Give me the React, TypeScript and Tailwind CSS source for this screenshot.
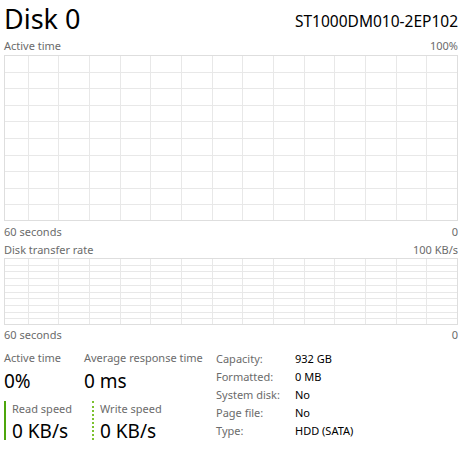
const labelText = "text-[11px] leading-[16px] text-[#6b6b6b]";
const fontStack = { fontFamily: '"Noto Sans", "Open Sans", sans-serif' };

function Grid({ height, rows }: { height: number; rows: number }) {
    const width = 454;
    const colStep = 30.67;
    const cols = [];
    for (let k = 1; k <= 14; k++) {
        cols.push(Math.round(453 - colStep * k) + 0.5);
    }
    const hLines = [];
    for (let r = 1; r < rows; r++) {
        hLines.push(Math.round((height / rows) * r) + 0.5);
    }
    return (
        <svg width={width} height={height} className="block">
            {cols.map((x) => (
                <line key={x} x1={x} y1={0} x2={x} y2={height} stroke="#e8e8e8" />
            ))}
            {hLines.map((y) => (
                <line key={y} x1={0} y1={y} x2={width} y2={y} stroke="#e8e8e8" />
            ))}
            <rect
                x={0.5}
                y={0.5}
                width={width - 1}
                height={height - 1}
                fill="none"
                stroke="#dedede"
            />
        </svg>
    );
}

function LabelRow({ left, right }: { left: string; right: string }) {
    return (
        <div className={`flex justify-between ${labelText}`}>
            <span>{left}</span>
            <span>{right}</span>
        </div>
    );
}

const specs = [
    ["Capacity:", "932 GB"],
    ["Formatted:", "0 MB"],
    ["System disk:", "No"],
    ["Page file:", "No"],
    ["Type:", "HDD (SATA)"],
];

export default function App() {
    return (
        <div
            className="w-[471px] h-[452px] bg-white pl-[4px] pr-[13px] overflow-hidden"
            style={fontStack}
        >
            <div className="flex justify-between items-end h-[36px]">
                <span className="text-[27px] leading-[34px] text-black">Disk 0</span>
                <span className="text-[15.5px] leading-[22px] text-black mb-[4px]">
                    ST1000DM010-2EP102
                </span>
            </div>
            <div className="mt-[2px]">
                <LabelRow left="Active time" right="100%" />
            </div>
            <div className="mt-[1px]">
                <Grid height={166} rows={10} />
            </div>
            <div className="mt-[3px]">
                <LabelRow left="60 seconds" right="0" />
            </div>
            <div className="mt-[2px]">
                <LabelRow left="Disk transfer rate" right="100 KB/s" />
            </div>
            <div>
                <Grid height={67} rows={10} />
            </div>
            <div className="mt-[2px]">
                <LabelRow left="60 seconds" right="0" />
            </div>

            <div className="flex mt-[7px]">
                <div className="flex flex-col w-[212px]">
                    <div className="flex">
                        <div className="w-[80px]">
                            <div className={labelText}>Active time</div>
                            <div className="text-[19px] leading-[26px] text-black mt-[2px]">0%</div>
                        </div>
                        <div>
                            <div className={labelText}>Average response time</div>
                            <div className="text-[19px] leading-[26px] text-black mt-[2px]">0 ms</div>
                        </div>
                    </div>
                    <div className="flex mt-[7px]">
                        <div className="w-[88px] flex">
                            <div className="w-[2px] h-[39px] bg-[#4da60c]" />
                            <div className="pl-[6px]">
                                <div className={labelText}>Read speed</div>
                                <div className="text-[19px] leading-[26px] text-black mt-[1px]">0 KB/s</div>
                            </div>
                        </div>
                        <div className="flex">
                            <div className="w-[2px] h-[39px] border-l-2 border-dotted border-[#7cc130]" />
                            <div className="pl-[6px]">
                                <div className={labelText}>Write speed</div>
                                <div className="text-[19px] leading-[26px] text-black mt-[1px]">0 KB/s</div>
                            </div>
                        </div>
                    </div>
                </div>
                <div className="flex flex-col">
                    {specs.map(([k, v]) => (
                        <div key={k} className="flex h-[18px] items-center text-[11px]">
                            <span className="w-[79px] text-[#6b6b6b]">{k}</span>
                            <span className="text-black">{v}</span>
                        </div>
                    ))}
                </div>
            </div>
        </div>
    );
}
